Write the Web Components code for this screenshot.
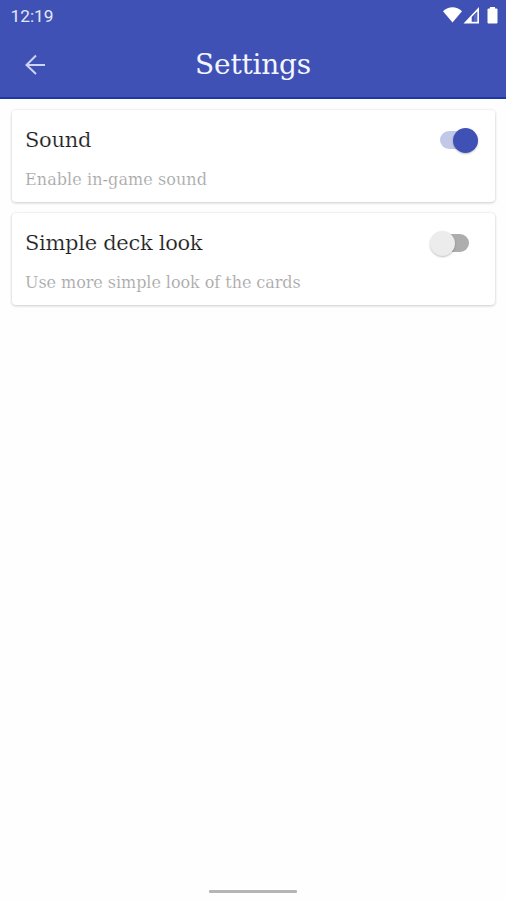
<!DOCTYPE html>
<html lang="en">
<head>
<meta charset="utf-8">
<title>Settings</title>
<style>
	body{
		margin:0;
		background-color:#fefefe;
		font-family:"DejaVu Serif", serif;
	}
</style>
</head>
<body>

<app-screen>
	<status-bar slot="top">12:19</status-bar>
	<app-header slot="top">Settings</app-header>
	<setting-card checked style="--title-spacing:-.3px; --text-spacing:.08px">
		<span slot="title">Sound</span>
		<span slot="text">Enable in-game sound</span>
	</setting-card>
	<setting-card style="--title-spacing:-.3px; --text-spacing:-.05px">
		<span slot="title">Simple deck look</span>
		<span slot="text">Use more simple look of the cards</span>
	</setting-card>
</app-screen>

<script>
// creates the shadow root of an element from its markup
function attach( element, html ){
	const template = document.createElement('template');
	template.innerHTML = html;
	element.attachShadow({mode:'open'});
	element.shadowRoot.appendChild(template.content.cloneNode(true));
}

class AppScreen extends HTMLElement{

	constructor(){
		super();
		attach(this, `
			<style>
				:host{
					display:flex;
					flex-direction:column;
					height:900px;
					overflow:hidden;
				}
				.top{
					box-sizing:border-box;
					height:99px;
					flex:none;
					background-color:#3f51b5;
					border-bottom:2px solid #1f37a2;
				}
				main{
					flex:1;
					display:flex;
					flex-direction:column;
					gap:11px;
					padding:11px 11px 0 12px;
				}
				.home{
					width:88px;
					height:3px;
					margin:0 auto 7px 209px;
					background-color:#b5b5b5;
					border-radius:1px;
				}
			</style>
			<div class="top"><slot name="top"></slot></div>
			<main><slot></slot></main>
			<div class="home"></div>
		`);
	}

}
window.customElements.define('app-screen', AppScreen);

class StatusBar extends HTMLElement{

	constructor(){
		super();
		attach(this, `
			<style>
				:host{
					display:flex;
					justify-content:space-between;
					height:32px;
					padding:0 7px 0 10.5px;
					font:17.3px/32px Roboto, sans-serif;
					color:#e4e7fb;
				}
				svg{
					display:block;
				}
			</style>
			<span><slot></slot></span>
			<svg width="56" height="32" viewBox="443 0 56 32">
				<path fill="#fff" d="M443 11.2C448.500 5.900 456.500 5.900 462 11.200L452.500 22.500Z"/>
				<path fill="#fff" fill-rule="evenodd" d="M479 7V23.500H463.500ZM477.300 11.300L471.700 17V21.800H477.300Z"/>
				<path fill="#8b97d8" d="M474 15.500L477.300 12V21.800H474Z" opacity=".35"/>
				<path fill="#fff" d="M490 7H495V8.500H496.500Q497.500 8.500 497.500 9.500V22.500Q497.500 23.500 496.500 23.500H488.500Q487.500 23.500 487.500 22.500V9.500Q487.500 8.500 488.500 8.500H490Z"/>
			</svg>
		`);
	}

}
window.customElements.define('status-bar', StatusBar);

class AppHeader extends HTMLElement{

	constructor(){
		super();
		attach(this, `
			<style>
				:host{
					display:grid;
					grid-template-columns:70px 1fr 70px;
					align-items:center;
					height:65px;
				}
				svg{
					display:block;
					margin-left:24px;
				}
				h1{
					margin:0;
					padding-top:1px;
					text-align:center;
					font-size:28px;
					font-weight:normal;
					line-height:64px;
					letter-spacing:-.2px;
					color:#f4f5ff;
				}
			</style>
			<svg width="22" height="22" viewBox="24 54 22 22" fill="none" stroke="#ced4f7" stroke-width="2">
				<path d="M45 65H27M36 55.500L26.500 65L36 74"/>
			</svg>
			<h1><slot></slot></h1>
		`);
	}

}
window.customElements.define('app-header', AppHeader);

class ToggleSwitch extends HTMLElement{

	constructor(){
		super();
		attach(this, `
			<style>
				:host{
					display:flex;
					align-items:center;
					width:39px;
					height:26px;
				}
				.track{
					flex:none;
					width:28px;
					height:18px;
					margin-left:11px;
					border-radius:9px;
					background-color:#adadad;
				}
				.thumb{
					flex:none;
					width:25px;
					height:25px;
					margin-left:-39px;
					border-radius:50%;
					background-color:#ececec;
					box-shadow:0 1px 2px rgba(0,0,0,.25);
				}
				:host([checked]) .track{
					background-color:#c1c8e8;
				}
				:host([checked]) .thumb{
					margin-left:-15px;
					background-color:#3f51b5;
				}
			</style>
			<div class="track"></div>
			<div class="thumb"></div>
		`);
	}

}
window.customElements.define('toggle-switch', ToggleSwitch);

class SettingCard extends HTMLElement{

	constructor(){
		super();
		attach(this, `
			<style>
				:host{
					display:block;
					box-sizing:border-box;
					height:92px;
					padding:16px 16px 0 13px;
					border-radius:4px;
					background-color:#fff;
					box-shadow:0 1px 3px rgba(0,0,0,.17), 0 0 3px rgba(0,0,0,.08);
				}
				.row{
					display:flex;
					justify-content:space-between;
					align-items:center;
					height:28px;
				}
				h2{
					margin:0;
					font-size:21px;
					font-weight:normal;
					line-height:28px;
					letter-spacing:var(--title-spacing);
					color:#1c1c1c;
					-webkit-text-stroke:.2px #fff;
				}
				p{
					margin:14px 0 0;
					font-size:16px;
					line-height:24px;
					letter-spacing:var(--text-spacing);
					color:#a2a2a2;
					-webkit-text-stroke:.2px #fff;
				}
				toggle-switch{
					margin-right:10px;
				}
				toggle-switch[checked]{
					margin-right:11px;
				}
			</style>
			<div class="row">
				<h2><slot name="title"></slot></h2>
				<toggle-switch></toggle-switch>
			</div>
			<p><slot name="text"></slot></p>
		`);
	}

	connectedCallback(){
		// pasa el estado al switch
		this.shadowRoot.querySelector('toggle-switch').toggleAttribute('checked', this.hasAttribute('checked'));
	}

}
window.customElements.define('setting-card', SettingCard);
</script>
</body>
</html>
